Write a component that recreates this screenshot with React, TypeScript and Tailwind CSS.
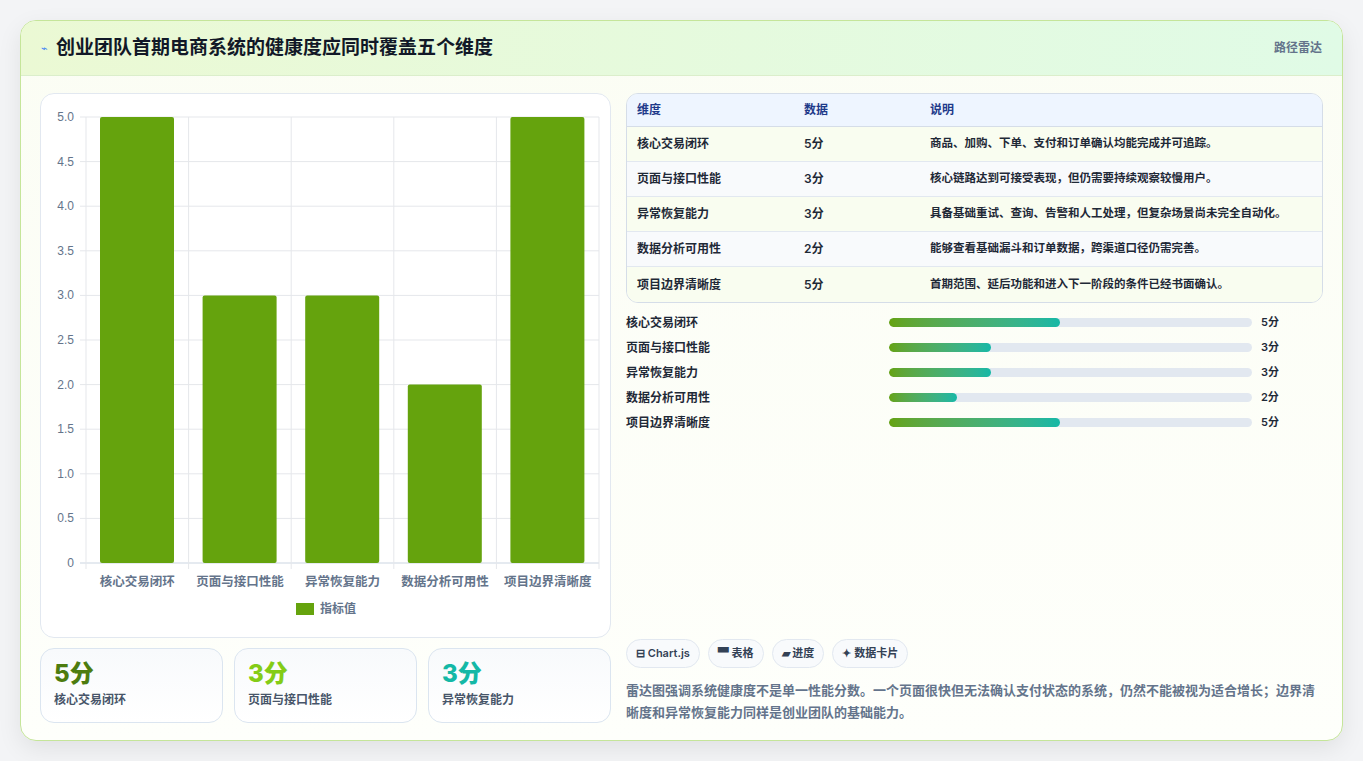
import React from "react";

const rows = [
  ["核心交易闭环", "5分", "商品、加购、下单、支付和订单确认均能完成并可追踪。", 5],
  ["页面与接口性能", "3分", "核心链路达到可接受表现，但仍需要持续观察较慢用户。", 3],
  ["异常恢复能力", "3分", "具备基础重试、查询、告警和人工处理，但复杂场景尚未完全自动化。", 3],
  ["数据分析可用性", "2分", "能够查看基础漏斗和订单数据，跨渠道口径仍需完善。", 2],
  ["项目边界清晰度", "5分", "首期范围、延后功能和进入下一阶段的条件已经书面确认。", 5],
] as const;

function Chart() {
  const x0 = 45, x1 = 558, y0 = 23, y1 = 469;
  const unit = (y1 - y0) / 5;
  const cw = (x1 - x0) / 5;
  const ticks = [0, 0.5, 1, 1.5, 2, 2.5, 3, 3.5, 4, 4.5, 5];
  return (
    <svg width="570" height="544" className="block">
      {ticks.map((t) => {
        const y = y1 - t * unit;
        return (
          <g key={t}>
            <line x1={x0 - 6} x2={x1} y1={y} y2={y} stroke={t === 0 ? "#cbd5e1" : "#e5e7eb"} />
            <text x={x0 - 12} y={y + 4} textAnchor="end" fontSize="12" fill="#64748b" fontFamily="Liberation Sans, sans-serif">
              {t === 0 ? "0" : t.toFixed(1)}
            </text>
          </g>
        );
      })}
      {[0, 1, 2, 3, 4, 5].map((i) => (
        <line key={i} x1={x0 + i * cw} x2={x0 + i * cw} y1={y0} y2={y1 + 6} stroke="#e5e7eb" />
      ))}
      {rows.map((r, i) => {
        const h = (r[3] as number) * unit;
        const bx = x0 + i * cw + 14;
        return (
          <g key={i}>
            <rect x={bx} y={y1 - h} width={74} height={h} fill="#65a30d" rx="2" />
            <text x={x0 + i * cw + cw / 2} y={y1 + 23} textAnchor="middle" fontSize="12.5" fontWeight="600" fill="#64748b" fontFamily="Noto Sans CJK SC, sans-serif">
              {r[0]}
            </text>
          </g>
        );
      })}
      <rect x={255} y={509} width={18} height={12} fill="#65a30d" />
      <text x={279} y={519} fontSize="12" fontWeight="600" fill="#64748b" fontFamily="Noto Sans CJK SC, sans-serif">指标值</text>
    </svg>
  );
}

export default function App() {
  const ff = { fontFamily: "Inter, 'Noto Sans CJK SC', sans-serif" };
  return (
    <div className="w-[1363px] h-[761px] bg-[#f3f4f6] p-[20px]" style={ff}>
      <div className="h-[721px] rounded-[16px] border border-[#c5e59a] bg-gradient-to-b from-[#fbfdf4] to-[#fefffb] shadow-[0_8px_24px_rgba(0,0,0,0.08)] overflow-hidden flex flex-col">
        <div className="h-[55px] shrink-0 flex items-center justify-between px-[20px] bg-gradient-to-r from-[#ebf9d4] to-[#e0fbe6] border-b border-[#dbeecb]">
          <div className="flex items-center gap-[8px]">
            <span className="text-[#3b82f6] text-[11px]">⌁</span>
            <h1 className="text-[19px] font-bold text-[#111827]">创业团队首期电商系统的健康度应同时覆盖五个维度</h1>
          </div>
          <span className="text-[12px] font-semibold text-[#64748b]">路径雷达</span>
        </div>
        <div className="flex-1 flex gap-[15px] px-[19px] pt-[17px]">
          <div className="w-[571px] flex flex-col gap-[10px]">
            <div className="h-[545px] rounded-[14px] border border-[#e2e8f0] bg-white">
              <Chart />
            </div>
            <div className="grid grid-cols-3 gap-[11px]">
              {[["5分", "text-[#4d7c0f]", "核心交易闭环"], ["3分", "text-[#84cc16]", "页面与接口性能"], ["3分", "text-[#14b8a6]", "异常恢复能力"]].map(([v, c, l]) => (
                <div key={l} className="h-[75px] rounded-[14px] border border-[#dbe5f0] bg-gradient-to-b from-[#f8fafc] to-white px-[13px] pt-[10px]">
                  <div className={`text-[24px] font-extrabold leading-[30px] ${c}`}>{v}</div>
                  <div className="text-[12px] font-semibold text-[#475569] mt-[2px]">{l}</div>
                </div>
              ))}
            </div>
          </div>
          <div className="flex-1 flex flex-col">
            <div className="rounded-[12px] border border-[#d5dde8] overflow-hidden text-[12px]">
              <div className="flex h-[33px] items-center bg-[#eef5ff] font-semibold text-[#1e3a8a] border-b border-[#d5dde8]">
                <div className="w-[177px] pl-[10px]">维度</div>
                <div className="w-[126px]">数据</div>
                <div>说明</div>
              </div>
              {rows.map((r, i) => (
                <div key={i} className={`flex h-[35px] items-center font-semibold text-[#1f2937] ${i < 4 ? "border-b border-[#e2e8f0]" : ""} ${i % 2 ? "bg-[#f8fafc]" : "bg-[#f9fdf0]"}`}>
                  <div className="w-[177px] pl-[10px]">{r[0]}</div>
                  <div className="w-[126px]">{r[1]}</div>
                  <div className="text-[11.5px]">{r[2]}</div>
                </div>
              ))}
            </div>
            <div className="flex flex-col gap-[8px] mt-[11px]">
              {rows.map((r, i) => (
                <div key={i} className="flex items-center h-[17px] text-[12px] font-semibold text-[#1f2937]">
                  <div className="w-[263px]">{r[0]}</div>
                  <div className="w-[363px] h-[9px] rounded-full bg-[#e2e8f0] overflow-hidden">
                    <div className="h-full rounded-full bg-gradient-to-r from-[#65a30d] to-[#14b8a6]" style={{ width: `${((r[3] as number) / 5) * 47}%` }} />
                  </div>
                  <div className="ml-[9px] text-[11px]">{r[1]}</div>
                </div>
              ))}
            </div>
            <div className="flex-1" />
            <div className="flex gap-[8px] text-[11px] font-semibold text-[#334155]">
              {["⊟ Chart.js", "▀ 表格", "▰ 进度", "✦ 数据卡片"].map((t) => (
                <span key={t} className="h-[29px] px-[9px] flex items-center rounded-full border border-[#e2e8f0] bg-[#f8fafc]">{t}</span>
              ))}
            </div>
            <p className="mt-[11px] text-[13px] leading-[22px] font-semibold text-[#64748b] pb-[17px]">
              雷达图强调系统健康度不是单一性能分数。一个页面很快但无法确认支付状态的系统，仍然不能被视为适合增长；边界清晰度和异常恢复能力同样是创业团队的基础能力。
            </p>
          </div>
        </div>
      </div>
    </div>
  );
}
